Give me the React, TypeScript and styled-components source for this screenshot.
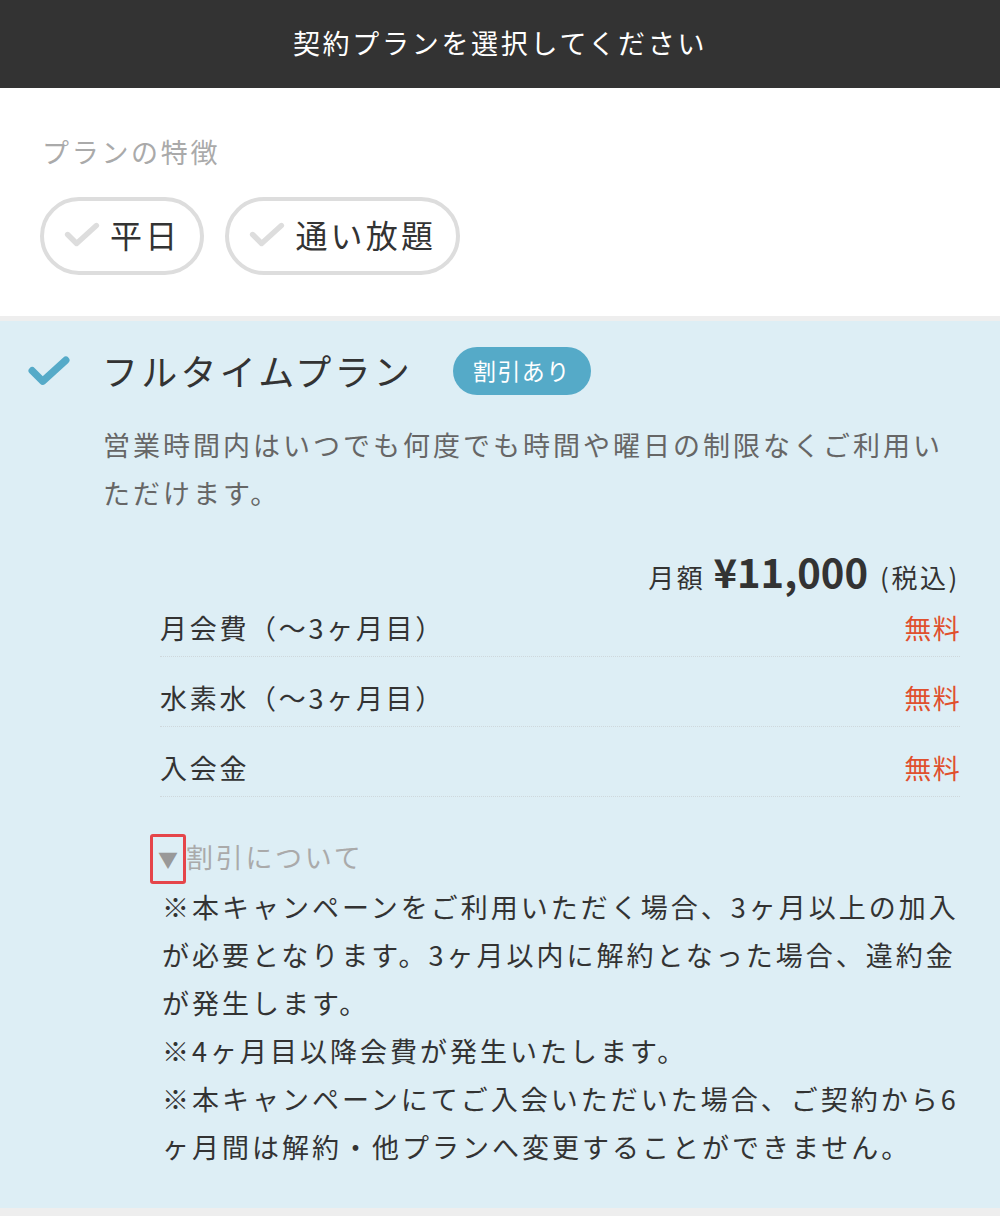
import React from 'react';
import styled, {createGlobalStyle} from "styled-components";

const GlobalStyle = createGlobalStyle`
    html, body {
      margin: 0;
      padding: 0;
      background: #ffffff;
    }
    body {
      font-family: "Noto Sans CJK JP", "Noto Sans", sans-serif;
      color: #333333;
    }
    * {
      box-sizing: border-box;
    }
`

const Page = styled.div`
    width: 1000px;
    display: flex;
    flex-direction: column;
`

const Header = styled.header`
    height: 88px;
    padding-bottom: 3px;
    background-color: #333333;
    color: #ffffff;
    display: flex;
    align-items: center;
    justify-content: center;
    font-size: 27px;
    letter-spacing: 0.1em;
`

const FeatureSection = styled.section`
    padding: 0 40px 41px;
    display: flex;
    flex-direction: column;
`

const FeatureLabel = styled.div`
    margin-top: 40px;
    font-size: 27px;
    line-height: 48px;
    letter-spacing: 0.1em;
    color: #aaaaaa;
    padding-left: 2px;
`

const ChipRow = styled.div`
    margin-top: 21px;
    display: flex;
    gap: 21px;
`

const Chip = styled.div`
    height: 78px;
    border: 4px solid #dddddd;
    border-radius: 39px;
    display: flex;
    align-items: center;
    gap: 10px;
    padding: 0 20px 4px 20px;
    font-size: 32px;
    letter-spacing: 0.1em;
    color: #333333;
`

const PlanCard = styled.section`
    background-color: #ddeef5;
    border-top: 5px solid #eeeeee;
    border-bottom: 10px solid #eeeeee;
    padding: 26px 40px 37px 28px;
`

const PlanHeader = styled.div`
    display: flex;
    align-items: center;
    height: 48px;
`

const PlanTitle = styled.h2`
    margin: 0 0 0 32px;
    padding-bottom: 3px;
    font-size: 36px;
    font-weight: 400;
    letter-spacing: 0.09em;
    line-height: 48px;
    color: #333333;
`

const Badge = styled.span`
    margin-left: 40px;
    height: 48px;
    padding: 0 20px 3px;
    border-radius: 24px;
    background-color: #55aac8;
    color: #ffffff;
    font-size: 23px;
    letter-spacing: 0.06em;
    display: inline-flex;
    align-items: center;
`

const PlanBody = styled.div`
    margin-left: 75px;
`

const Description = styled.p`
    margin: 26px 0 0;
    font-size: 27px;
    line-height: 48px;
    letter-spacing: 3px;
    color: #666666;
`

const Details = styled.div`
    margin-left: 57px;
    margin-top: 34px;
`

const PriceLine = styled.div`
    display: flex;
    justify-content: flex-end;
    align-items: baseline;
    line-height: 40px;
    font-size: 26px;
    letter-spacing: 0.1em;
    color: #333333;
`

const PriceAmount = styled.span`
    font-size: 40px;
    font-weight: 700;
    letter-spacing: 0;
    margin: 0 12px 0 8px;
`

const FeeList = styled.ul`
    list-style: none;
    margin: -10px 0 0;
    padding: 0;
`

const FeeRow = styled.li`
    display: flex;
    justify-content: space-between;
    padding: 21px 0 8px;
    line-height: 40px;
    font-size: 27px;
    letter-spacing: 0.1em;
    border-bottom: 1px dotted #cfd8dc;
`

const FeeValue = styled.span<{ free?: boolean }>`
    color: ${({free}) => free ? '#e0502e' : '#333333'};
    letter-spacing: 0.05em;
    margin-right: -1px;
`

const Toggle = styled.div`
    margin-top: 35px;
    display: flex;
    align-items: center;
    height: 48px;
    font-size: 27px;
    letter-spacing: 0.1em;
    color: #aaaaaa;
`

const ToggleMarker = styled.span`
    margin-left: -10px;
    margin-top: 6px;
    width: 36px;
    height: 50px;
    border: 3px solid #e5454a;
    border-radius: 3px;
    display: inline-flex;
    align-items: center;
    justify-content: center;
    font-size: 20px;
    letter-spacing: 0;
    color: #999999;
`

const Notes = styled.p`
    margin: 3px -10px 0 2px;
    font-size: 27px;
    line-height: 48px;
    letter-spacing: 3px;
    color: #333333;
`

const CheckMark = ({color, size, stroke}: { color: string, size: number, stroke: number }) => (
    <svg width={size} height={size * 0.75} viewBox="0 0 40 30" fill="none">
        <path d="M4 15 L14 25 L36 5" stroke={color} strokeWidth={stroke} strokeLinecap="round" strokeLinejoin="round"/>
    </svg>
)

const fees = [
    {label: '月会費（〜3ヶ月目）', value: '無料'},
    {label: '水素水（〜3ヶ月目）', value: '無料'},
    {label: '入会金', value: '無料'},
]

export default function App() {
    return <Page>
        <GlobalStyle/>
        <Header>契約プランを選択してください</Header>
        <FeatureSection>
            <FeatureLabel>プランの特徴</FeatureLabel>
            <ChipRow>
                <Chip><CheckMark color="#dddddd" size={36} stroke={6}/>平日</Chip>
                <Chip><CheckMark color="#dddddd" size={36} stroke={6}/>通い放題</Chip>
            </ChipRow>
        </FeatureSection>
        <PlanCard>
            <PlanHeader>
                <CheckMark color="#55aac8" size={42} stroke={7}/>
                <PlanTitle>フルタイムプラン</PlanTitle>
                <Badge>割引あり</Badge>
            </PlanHeader>
            <PlanBody>
                <Description>営業時間内はいつでも何度でも時間や曜日の制限なくご利用いただけます。</Description>
                <Details>
                    <PriceLine>
                        月額<PriceAmount>¥11,000</PriceAmount>(税込)
                    </PriceLine>
                    <FeeList>
                        {fees.map(fee => <FeeRow key={fee.label}>
                            <span>{fee.label}</span>
                            <FeeValue free>{fee.value}</FeeValue>
                        </FeeRow>)}
                    </FeeList>
                    <Toggle>
                        <ToggleMarker>▼</ToggleMarker>
                        割引について
                    </Toggle>
                    <Notes>
                        ※本キャンペーンをご利用いただく場合、3ヶ月以上の加入が必要となります。3ヶ月以内に解約となった場合、違約金が発生します。<br/>
                        ※4ヶ月目以降会費が発生いたします。<br/>
                        ※本キャンペーンにてご入会いただいた場合、ご契約から6ヶ月間は解約・他プランへ変更することができません。
                    </Notes>
                </Details>
            </PlanBody>
        </PlanCard>
    </Page>
}
